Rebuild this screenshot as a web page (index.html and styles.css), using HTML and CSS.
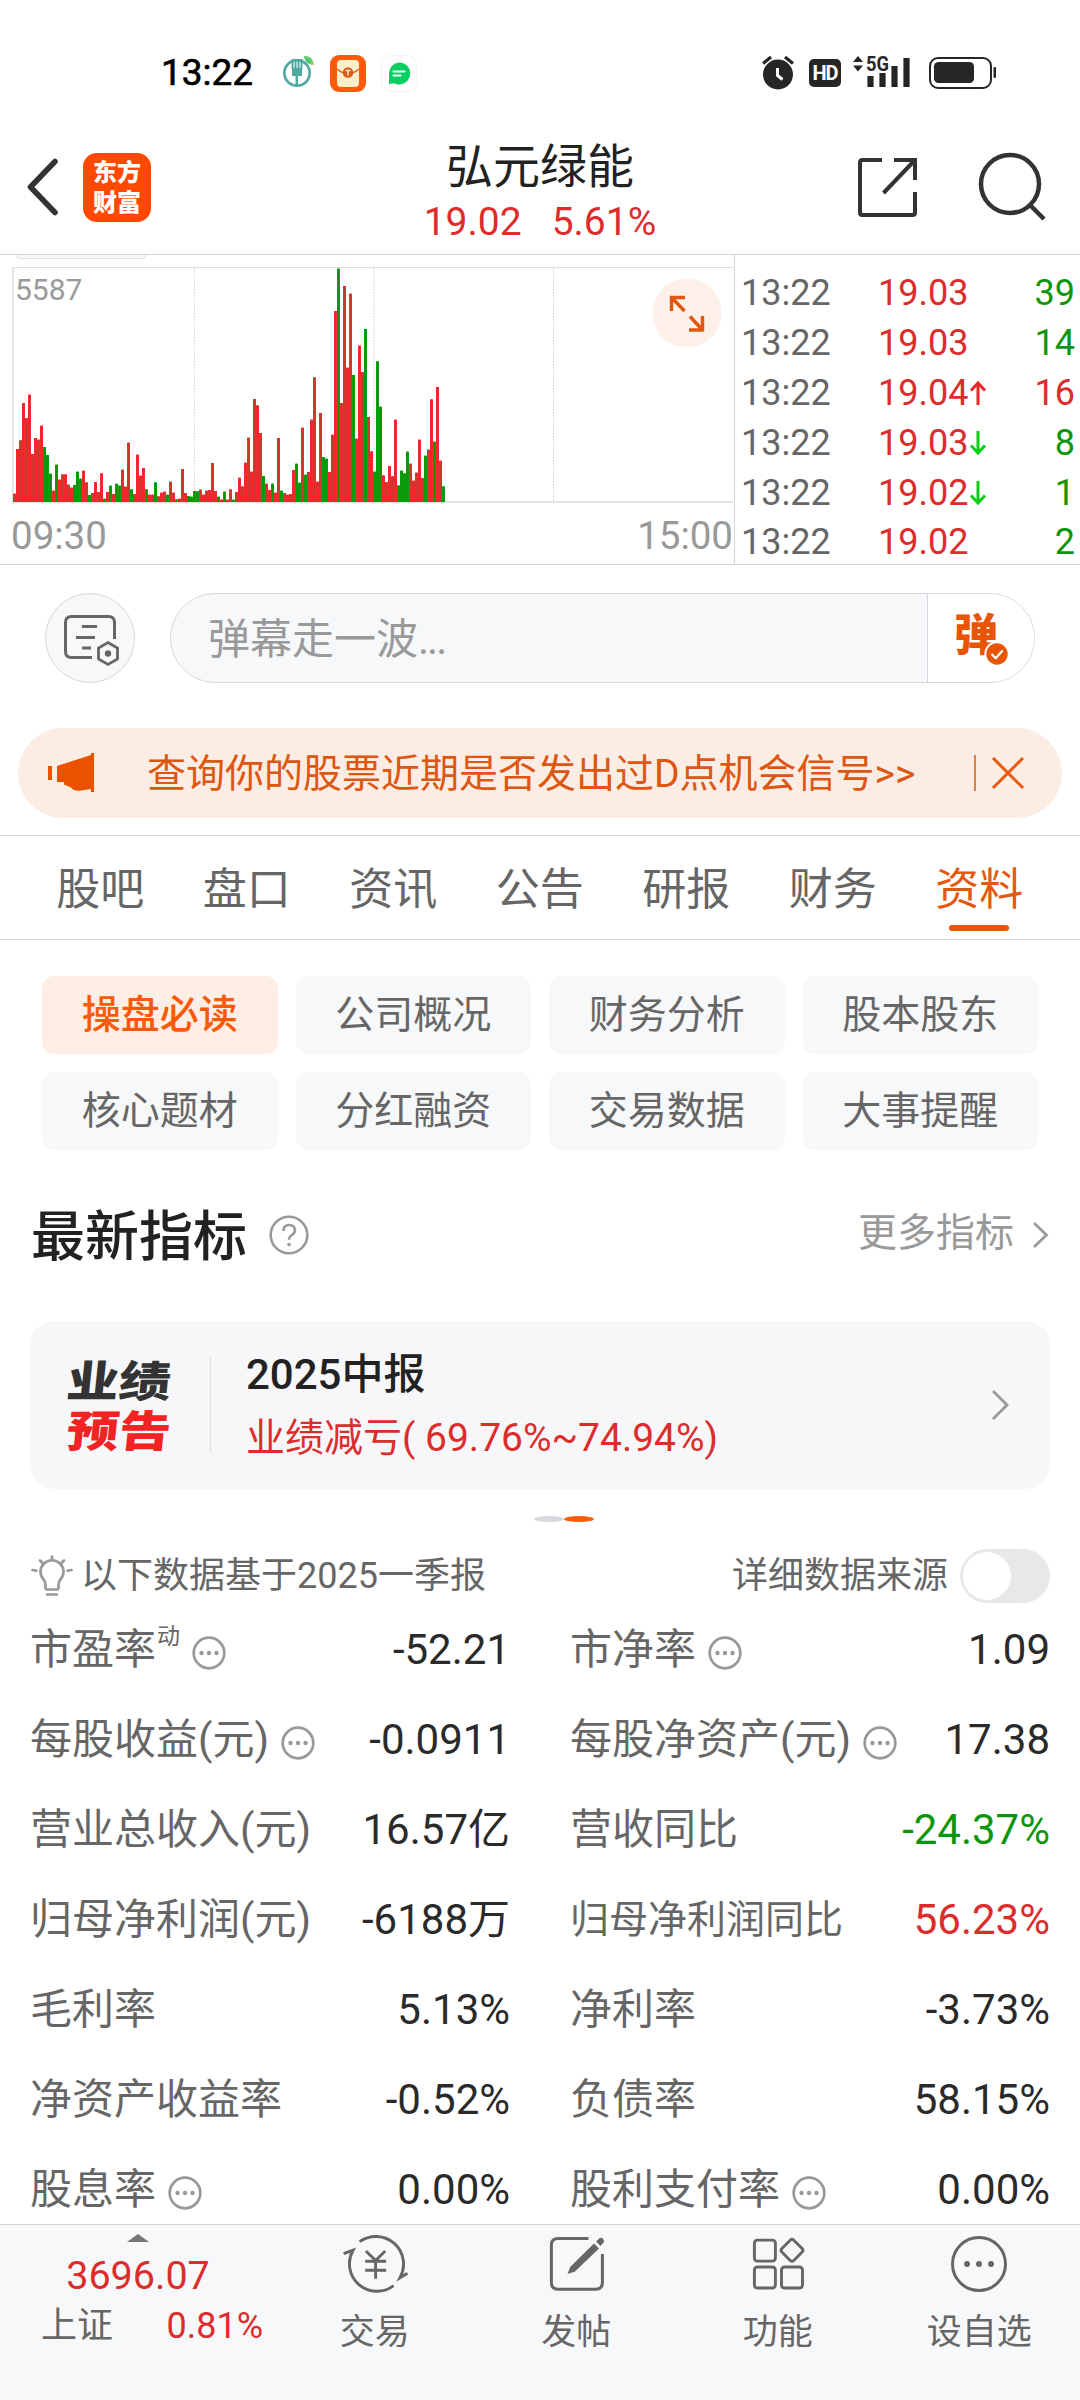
FILE: index.html
```html
<!DOCTYPE html>
<html lang="zh-CN">
<head>
<meta charset="utf-8">
<title>弘元绿能</title>
<link rel="stylesheet" href="styles.css">
</head>
<body>
<div class="screen">
  <header class="status">
    <span class="status-time">13:22</span>
    <svg class="app-a" width="34" height="34" viewBox="0 0 34 34">
      <circle cx="15" cy="19" r="12.7" fill="none" stroke="#4fa9a3" stroke-width="2.6"/>
      <path d="M10.500 5v10M13.500 5v10M16.500 5v10M19.500 5v10" stroke="#4fa9a3" stroke-width="2"/>
      <path d="M10 14h10v8h-4v9h-2.500v-9H10z" fill="#4fa9a3"/>
      <path d="M22 2c6 0 9 2 10 9-6 0-9-3-10-9z" fill="#7bcf5a"/>
      <path d="M22 2l6 3 1 4-5-1z" fill="#4cc58b"/>
    </svg>
    <svg class="app-b" width="36" height="37" viewBox="0 0 36 37">
      <rect width="36" height="37" rx="9" fill="#ff5a0a"/>
      <rect x="7" y="5" width="22" height="27" rx="4" fill="#fff0cc"/>
      <path d="M7 14q5 4.500 11 4.500T29 14" fill="none" stroke="#e2591c" stroke-width="1.500"/>
      <circle cx="18" cy="17.500" r="5.300" fill="#dd5a1b"/>
      <path d="M15.500 15.500h5M18 15.500v5" stroke="#fff0cc" stroke-width="1.400"/>
    </svg>
    <svg class="app-c" width="36" height="37" viewBox="0 0 36 37">
      <rect x=".5" y=".5" width="35" height="36" rx="9" fill="#fff" stroke="#f3f3f3"/>
      <path d="M18 7.500a11 11 0 1 1-5 20.700L8 29V18.500A11 11 0 0 1 18 7.500z" fill="#06d160"/>
      <path d="M12.500 16.500h11M12.500 20.500h7" stroke="#fff" stroke-width="1.900" stroke-linecap="round"/>
    </svg>
    <svg class="alarm" width="32" height="35" viewBox="0 0 32 35">
      <circle cx="16" cy="19.500" r="15" fill="#262626"/>
      <path d="M1 8.500l8-6.500M31 8.500L23 2" stroke="#262626" stroke-width="3.200"/>
      <path d="M15.500 13v7.500l5 4" fill="none" stroke="#fff" stroke-width="3"/>
    </svg>
    <span class="hd">HD</span>
    <svg class="signal" width="62" height="44" viewBox="0 -10 62 44">
      <path d="M1 7l5-6 5 6zM1 10.500l5 6 5-6z" fill="#262626"/>
      <text x="14" y="16" class="net" textLength="23" lengthAdjust="spacingAndGlyphs">5G</text>
      <path d="M18.500 21v11M30.500 18v14M42.500 11v21M54.500 3v29" stroke="#262626" stroke-width="6.200"/>
    </svg>
    <svg class="battery" width="68" height="32" viewBox="0 0 68 32">
      <rect x="1" y="1" width="61" height="30" rx="8" fill="#fff" stroke="#262626" stroke-width="2"/>
      <rect x="5" y="5" width="40" height="21" rx="4.500" fill="#262626"/>
      <rect x="64.500" y="10" width="2.500" height="11" rx="1" fill="#262626"/>
    </svg>
  </header>

  <nav class="titlebar">
    <svg class="back" width="34" height="58" viewBox="0 0 34 58"><path d="M30 3.500L5.500 29 30 54.500" fill="none" stroke="#333" stroke-width="5.500" stroke-linecap="round" stroke-linejoin="round"/></svg>
    <div class="logo"><span>东方</span><span>财富</span></div>
    <div class="stock">
      <h1>弘元绿能</h1>
      <p><span>19.02</span><span>5.61%</span></p>
    </div>
    <svg class="share" width="60" height="60" viewBox="0 0 60 60"><path d="M24 3H4.500Q2 3 2 5.500v50Q2 58 4.500 58h50Q57 58 57 55.500V35M36 3h21v20M57 3L25.500 36" fill="none" stroke="#333" stroke-width="4"/></svg>
    <svg class="search" width="70" height="70" viewBox="0 0 70 70"><circle cx="32" cy="33" r="29" fill="none" stroke="#333" stroke-width="4.500"/><path d="M52 54l14 14" stroke="#333" stroke-width="4.500"/></svg>
  </nav>

  <section class="quote">
    <div class="chart">
      <div class="stub"></div>
      <div class="plot">
        <svg class="volume" id="volume" width="721" height="236" viewBox="0 0 721 236">
          <path d="M182.500 1v233M362 1v233M541.500 1v233" stroke="#d0d0d0" stroke-width="1" stroke-dasharray="1.500 1.500"/>
          <path d="M0 .5h721" stroke="#dfdfdf" stroke-width="1"/>
          <path d="M1 0v236M0 235h721" stroke="#e3e3e3" stroke-width="2"/>
        </svg>
        <span class="peak">5587</span>
        <svg class="expand" width="70" height="70" viewBox="0 0 70 70"><circle cx="35" cy="35" r="34.500" fill="#fdf0e8"/><path d="M19.500 33V19.500H33M20 20l12.500 13M37 52h13.500V38M50 51.500L38 38.500" fill="none" stroke="#e0570d" stroke-width="3.400"/></svg>
      </div>
      <div class="axis"><span>09:30</span><span>15:00</span></div>
    </div>
    <div class="ticks">
      <div class="tick"><span>13:22</span><span class="up">19.03</span><i></i><b class="down">39</b></div>
      <div class="tick"><span>13:22</span><span class="up">19.03</span><i></i><b class="down">14</b></div>
      <div class="tick"><span>13:22</span><span class="up">19.04</span><i><svg width="18" height="24" viewBox="0 0 18 24"><path d="M9 24V2M2 9.500L9 2l7 7.500" fill="none" stroke="#ea2626" stroke-width="3"/></svg></i><b class="up">16</b></div>
      <div class="tick"><span>13:22</span><span class="up">19.03</span><i><svg width="18" height="24" viewBox="0 0 18 24"><path d="M9 0v22M2 14.500L9 22l7-7.500" fill="none" stroke="#0bcf16" stroke-width="3"/></svg></i><b class="down">8</b></div>
      <div class="tick"><span>13:22</span><span class="up">19.02</span><i><svg width="18" height="24" viewBox="0 0 18 24"><path d="M9 0v22M2 14.500L9 22l7-7.500" fill="none" stroke="#0bcf16" stroke-width="3"/></svg></i><b class="down">1</b></div>
      <div class="tick"><span>13:22</span><span class="up">19.02</span><i></i><b class="down">2</b></div>
    </div>
  </section>

  <section class="danmu">
    <div class="danmu-set">
      <svg width="58" height="54" viewBox="0 0 58 54"><path d="M51.500 25V8.500Q51.500 2.500 45.500 2.500H8.500Q2.500 2.500 2.500 8.500v29Q2.500 43.500 8.500 43.500H29M19 12.500h15M13 23.500h19M19 34h9" fill="none" stroke="#666" stroke-width="3"/><path d="M45 28.500l9.500 5.500v11L45 50.500 35.500 45V34z" fill="#f7f8fa" stroke="#666" stroke-width="2.800"/><circle cx="45" cy="39.500" r="3.200" fill="#666"/></svg>
    </div>
    <div class="danmu-bar">
      <span class="danmu-input">弹幕走一波<span class="ellipsis">...</span></span>
      <div class="danmu-btn"><span>弹</span>
        <svg class="check" width="26" height="26" viewBox="0 0 26 26"><circle cx="13" cy="13" r="11.700" fill="#e85505" stroke="#fff" stroke-width="2"/><path d="M7.500 13l4.200 4.200 7-7.700" fill="none" stroke="#fff" stroke-width="2.300"/></svg>
      </div>
    </div>
  </section>

  <section class="banner">
    <svg width="46" height="40" viewBox="0 0 46 40"><path d="M0 13h4v14H0zM9 13L43 2V0h3v39h-3v-3l-10 1.500q-7 1-10-3l-7-3V29H9z" fill="#eb5200"/></svg>
    <p>查询你的股票近期是否发出过D点机会信号&gt;&gt;</p>
    <span class="bar"></span>
    <svg width="34" height="34" viewBox="0 0 34 34"><path d="M2 2l30 30M32 2L2 32" stroke="#e85a10" stroke-width="3"/></svg>
  </section>

  <nav class="tabs">
    <span>股吧</span><span>盘口</span><span>资讯</span><span>公告</span><span>研报</span><span>财务</span><span class="on">资料</span>
  </nav>

  <section class="chips">
    <span class="on">操盘必读</span><span>公司概况</span><span>财务分析</span><span>股本股东</span>
    <span>核心题材</span><span>分红融资</span><span>交易数据</span><span>大事提醒</span>
  </section>

  <section class="heading">
    <h2>最新指标</h2>
    <svg width="40" height="40" viewBox="0 0 40 40"><circle cx="20" cy="20" r="18.300" fill="none" stroke="#999" stroke-width="2.600"/><path d="M14.500 16q0-6 5.700-6t5.700 5.200q0 3-3 4.800t-2.900 4.800" fill="none" stroke="#999" stroke-width="2.600"/><circle cx="20" cy="29.500" r="1.800" fill="#999"/></svg>
    <a>更多指标</a>
    <svg class="more" width="17" height="28" viewBox="0 0 17 28"><path d="M2 2l12.500 12L2 26" fill="none" stroke="#999" stroke-width="2.800"/></svg>
  </section>

  <section class="card">
    <div class="badge"><span>业绩</span><span class="red">预告</span></div>
    <div class="report">
      <h3>2025中报</h3>
      <p>业绩减亏( 69.76%~74.94%)</p>
    </div>
    <svg width="19" height="32" viewBox="0 0 19 32"><path d="M2 2l14 14L2 30" fill="none" stroke="#999" stroke-width="2.800"/></svg>
  </section>
  <div class="dots"><i></i><i class="on"></i></div>

  <section class="source">
    <svg width="42" height="42" viewBox="0 0 42 42"><path d="M14.500 29.500q0-3-2-5a11.500 11.500 0 1 1 17 0q-2 2-2 5v3q0 2-2 2h-9q-2 0-2-2zM16 39.500h10M21 1.500v3M9 5.500l2.500 2.500M33 5.500L30.500 8M1.500 15l4 .8M40.500 15l-4 .8" fill="none" stroke="#999" stroke-width="2.700" stroke-linecap="round"/></svg>
    <span class="basis">以下数据基于2025一季报</span>
    <span>详细数据来源</span>
    <i class="toggle"></i>
  </section>

  <section class="metrics">
    <div><span>市盈率</span><sup>动</sup><svg class="info"><use href="#dots"/></svg><b>-52.21</b></div>
    <div><span>市净率</span><svg class="info"><use href="#dots"/></svg><b>1.09</b></div>
    <div><span>每股收益(元)</span><svg class="info"><use href="#dots"/></svg><b>-0.0911</b></div>
    <div><span>每股净资产(元)</span><svg class="info"><use href="#dots"/></svg><b>17.38</b></div>
    <div><span>营业总收入(元)</span><b>16.57亿</b></div>
    <div><span>营收同比</span><b class="down">-24.37%</b></div>
    <div><span>归母净利润(元)</span><b>-6188万</b></div>
    <div><span class="tight">归母净利润同比</span><b class="up">56.23%</b></div>
    <div><span>毛利率</span><b>5.13%</b></div>
    <div><span>净利率</span><b>-3.73%</b></div>
    <div><span>净资产收益率</span><b>-0.52%</b></div>
    <div><span>负债率</span><b>58.15%</b></div>
    <div><span>股息率</span><svg class="info"><use href="#dots"/></svg><b>0.00%</b></div>
    <div><span>股利支付率</span><svg class="info"><use href="#dots"/></svg><b>0.00%</b></div>
  </section>

  <footer class="dock">
    <div class="index">
      <svg width="22" height="8" viewBox="0 0 22 8"><path d="M0 8L11 0l11 8z" fill="#777"/></svg>
      <strong>3696.07</strong>
      <p><span>上证</span><em>0.81%</em></p>
    </div>
    <div class="dock-item">
      <svg width="68" height="60" viewBox="0 0 68 60"><path d="M18.600 7.700A27.700 27.700 0 0 1 59 43.700l7.500-4.400M52.600 51.700A27.500 27.500 0 0 1 12 16.300l-9.400 3.400M24.900 17l9.700 9.500 9.600-9.500M34.600 26v18.700M24.200 27.300h21M24.200 36.300h21" fill="none" stroke="#666" stroke-width="2.900"/></svg>
      <span>交易</span>
    </div>
    <div class="dock-item">
      <svg width="58" height="60" viewBox="0 0 58 60"><path d="M41.500 4.500H11Q4.400 4.500 4.400 11v37.500Q4.400 55.200 11 55.200h37.500Q55.400 55.200 55.400 48.500V20" fill="none" stroke="#666" stroke-width="3"/><path d="M47 9.500l5 5-24 23-7.500 2.500 2.800-7.300zM49 7.500l3.500-3.300q2-1 3.500.5t.8 3.500L53.500 12z" fill="#666"/></svg>
      <span>发帖</span>
    </div>
    <div class="dock-item">
      <svg width="58" height="60" viewBox="0 0 58 60"><g fill="none" stroke="#666" stroke-width="2.900"><rect x="5.400" y="6.100" width="21" height="21" rx="3"/><rect x="5.400" y="33" width="21" height="21" rx="3"/><rect x="32.500" y="33" width="21" height="21" rx="3"/><rect x="34.600" y="7.900" width="16.800" height="16.800" rx="2.500" transform="rotate(45 43 16.300)"/></g></svg>
      <span>功能</span>
    </div>
    <div class="dock-item">
      <svg width="58" height="60" viewBox="0 0 58 60"><circle cx="29" cy="30" r="26.500" fill="none" stroke="#666" stroke-width="3"/><circle cx="17" cy="30" r="3" fill="#666"/><circle cx="29" cy="30" r="3" fill="#666"/><circle cx="41" cy="30" r="3" fill="#666"/></svg>
      <span>设自选</span>
    </div>
  </footer>
</div>

<svg class="defs" width="0" height="0">
  <symbol id="dots" viewBox="0 0 34 34"><circle cx="17" cy="17" r="15.300" fill="none" stroke="#999" stroke-width="2.700"/><circle cx="9.500" cy="17" r="2.200" fill="#999"/><circle cx="17" cy="17" r="2.200" fill="#999"/><circle cx="24.500" cy="17" r="2.200" fill="#999"/></symbol>
</svg>
<script src="volume.js"></script>
</body>
</html>
```
FILE: styles.css
```css
* { box-sizing: border-box; margin: 0; padding: 0; }
body { background: #fff; font-family: Roboto, "Noto Sans CJK SC", sans-serif; color: #222; }
svg { display: block; flex: none; }
i, em { font-style: normal; }
b { font-weight: 400; }
.defs { position: absolute; }
.screen { width: 1080px; height: 2400px; overflow: hidden; display: flex; flex-direction: column; }
.screen > * { flex: none; }
.up { color: #dc2c2c; }
.down { color: #0d960d; }

.status { height: 146px; display: flex; align-items: flex-start; padding-left: 161px; }
.status-time { font-size: 37px; font-weight: 400; -webkit-text-stroke: .6px #000; line-height: 42px; margin-top: 52px; width: 121px; color: #000; }
.app-a { margin-top: 54px; }
.app-b { margin: 55px 0 0 14px; }
.app-c { margin: 55px 0 0 15px; }
.alarm { margin: 55px 0 0 345px; }
.hd { margin: 59px 0 0 15px; width: 32px; height: 28px; border-radius: 5px; background: #262626; color: #fff; font-size: 20px; font-weight: 700; line-height: 28px; text-align: center; letter-spacing: -1px; }
.signal { margin: 45px 0 0 11px; }
.net { font: 700 21px Roboto, sans-serif; fill: #262626; }
.battery { margin: 57px 0 0 15px; }

.titlebar { height: 109px; border-bottom: 1px solid #d2d4d8; display: flex; align-items: flex-start; padding-left: 25px; }
.back { margin-top: 12px; }
.logo { margin: 7px 0 0 24px; width: 68px; height: 69px; border-radius: 14px; background: #ff4800; color: #fff; font-size: 24px; font-weight: 900; line-height: 30px; display: flex; flex-direction: column; align-items: center; padding-top: 5px; }
.stock { width: 378px; margin-left: 200px; text-align: center; }
.stock h1 { font-size: 47px; font-weight: 400; line-height: 47px; margin-top: -3px; color: #222; }
.stock p { display: flex; justify-content: center; gap: 30px; font-size: 39px; line-height: 44px; margin-top: 10px; color: #dc2c2c; }
.share { margin: 11px 0 0 129px; }
.search { margin: 5px 0 0 60px; }

.quote { height: 310px; border-bottom: 1px solid #d5d5d5; display: flex; overflow: hidden; }
.chart { width: 735px; border-right: 1px solid #d5d5d5; }
.stub { width: 130px; height: 4px; margin-left: 16px; border: 1px solid #dfe1e8; border-top: 0; border-radius: 0 0 8px 8px; background: #f7f8fc; }
.plot { position: relative; margin: 8px 0 0 12px; width: 721px; height: 236px; }
.peak { position: absolute; left: 3px; top: 5px; font-size: 30px; line-height: 36px; color: #999; }
.expand { position: absolute; left: 640px; top: 11px; }
.axis { display: flex; justify-content: space-between; padding: 10px 1px 0 11px; font-size: 38.500px; line-height: 46px; color: #999; }
.ticks { flex: 1; padding: 13.500px 5px 0 6px; }
.tick { height: 49.800px; display: flex; align-items: center; font-size: 36px; line-height: 50px; color: #666; }
.tick > span:first-child { width: 137px; }
.tick i { width: 20px; padding-left: 1px; }
.tick b { margin-left: auto; }

.danmu { height: 163px; padding: 28px 45px 0; display: flex; gap: 35px; }
.danmu-set { width: 90px; height: 90px; border: 1.500px solid #d5d8dd; border-radius: 50%; background: #f7f8fa; padding: 20px 0 0 17px; }
.danmu-bar { flex: 1; height: 90px; border: 1.500px solid #d5d8dd; border-radius: 45px; background: #f7f8fa; display: flex; overflow: hidden; }
.danmu-input { flex: 1; padding-left: 37px; font-size: 42px; line-height: 92px; color: #999; }
.ellipsis { letter-spacing: -2px; }
.danmu-btn { position: relative; width: 107px; background: #fff; border-left: 1.500px solid #d5d8dd; padding-left: 26px; font-size: 44px; font-weight: 900; line-height: 85px; color: #e85505; }
.check { position: absolute; left: 56px; top: 47px; }

.banner { margin: 0 18px; height: 90px; border-radius: 45px; background: #fcede4; display: flex; align-items: center; padding: 0 37px 0 30px; color: #dd5712; }
.banner p { flex: 1; padding-left: 53px; font-size: 39px; line-height: 90px; padding-top: 1px; }
.bar { width: 2px; height: 36px; background: #e0803f; margin-right: 15px; }

.tabs { margin-top: 17px; height: 105px; border-top: 1px solid #d8d8d8; border-bottom: 1px solid #d8d8d8; display: grid; grid-template-columns: repeat(7, 146.500px); grid-template-rows: 103px; padding-left: 27px; font-size: 44px; line-height: 109px; color: #666; text-align: center; }
.tabs .on { position: relative; color: #e2590f; }
.tabs .on::after { content: ""; position: absolute; left: 43px; bottom: 8px; width: 60px; height: 6px; border-radius: 3px; background: #e85505; }

.chips { margin: 36px 42px 0; display: grid; grid-template-columns: repeat(4, 1fr); gap: 18px; }
.chips span { height: 78px; border-radius: 12px; background: #f7f8fa; font-size: 39px; line-height: 79px; text-align: center; color: #666; }
.chips .on { background: #ffeee5; color: #f95a09; font-weight: 500; }

.heading { height: 171px; display: flex; align-items: center; padding: 0 31px 2px; }
.heading h2 { font-size: 54px; font-weight: 500; line-height: 60px; margin-right: 22px; padding-top: 7px; color: #222; }
.heading a { margin-left: auto; font-size: 39px; line-height: 60px; padding-bottom: 3px; color: #999; }
.more { margin-left: 18px; }

.card { margin: 0 30px; height: 168px; border-radius: 24px; background: #f7f7fa; display: flex; align-items: center; padding: 0 40px 0 37px; }
.badge { width: 144px; height: 96px; border-right: 1px solid #e0e0e4; font-size: 46px; font-weight: 900; line-height: 50px; color: #333; display: flex; flex-direction: column; align-items: flex-start; }
.badge span { height: 50px; transform: skewX(-6deg) scale(1.130, .940); transform-origin: left center; }
.badge .red { color: #f22323; }
.report { flex: 1; padding: 3px 0 0 35px; }
.report h3 { font-size: 42px; font-weight: 500; line-height: 62px; }
.report p { font-size: 39px; line-height: 64px; color: #dc2c2c; }

.dots { height: 59px; display: flex; justify-content: center; padding: 27px 0 0 48px; }
.dots i { width: 30px; height: 6px; border-radius: 50%; background: #d5d9dd; }
.dots .on { background: #fc5a06; }

.source { height: 56px; display: flex; align-items: center; padding: 0 30px 0 31px; font-size: 36px; line-height: 50px; color: #666; }
.source span { padding-bottom: 1px; }
.basis { margin-left: 8px; flex: 1; }
.toggle { margin-left: 12px; width: 90px; height: 54px; border-radius: 27px; background: #e8e8ea; padding: 3px; }
.toggle::before { content: ""; display: block; width: 48px; height: 48px; border-radius: 50%; background: #fff; }

.metrics { height: 620px; overflow: hidden; padding: 0 30px; display: grid; grid-template-columns: 1fr 1fr; grid-auto-rows: 90px; column-gap: 60px; font-size: 42px; color: #666; }
.metrics > div { display: flex; align-items: center; line-height: 90px; white-space: nowrap; padding-top: 2px; }
.metrics b { margin-left: auto; color: #2a2a2a; }
.metrics b.up { color: #dc2c2c; }
.metrics b.down { color: #0d960d; }
.metrics sup { font-size: 23px; line-height: 22px; align-self: flex-start; margin: 20px 0 0 1px; }
.metrics .tight { font-size: 39px; }
.info { width: 34px; height: 34px; margin: 6px 0 0 12px; }

.dock { flex: 1; margin-top: auto; border-top: 1px solid #d2d4d8; background: #f7f8fa; display: grid; grid-template-columns: 274px repeat(4, 201.500px); color: #666; }
.index { padding: 9px 0 0 2px; display: flex; flex-direction: column; align-items: center; }
.index strong { font-size: 39.500px; font-weight: 400; line-height: 46px; margin-top: 11px; color: #dc2c2c; }
.index p { width: 222px; margin-left: 28px; display: flex; justify-content: space-between; font-size: 36px; line-height: 50px; margin-top: 2px; }
.index em { color: #dc2c2c; }
.dock-item { display: flex; flex-direction: column; align-items: center; padding-top: 9px; font-size: 35px; line-height: 50px; gap: 14px; }
```
FILE: volume.js
```js
// Minute bars: the letter is the direction (r up, g down), the number the bar height in thirds of a pixel.
var bars = ("r25 r159 r185 r297 r252 r322 r144 r192 r187 r229 g165 g141 g85 r34 g112 r67 r83 r83 r52 r43 g51 g91 g70 r94 " +
  "r59 g21 r27 r60 r30 r86 g10 r30 g49 r24 g55 g49 r97 r46 r178 g38 r24 r142 r79 r102 g38 r22 r22 g59 " +
  "r17 r28 r31 g22 r61 r28 g8 r10 r99 r27 g18 g16 g33 g32 r37 r22 r34 r36 r117 r33 g16 r7 g31 r7 " +
  "r38 g7 r30 r73 r47 r118 r193 r91 r309 r290 r207 g78 r55 r36 g55 r28 r192 g34 r27 r22 r24 r96 g115 g58 " +
  "r223 g82 r90 r247 r374 r61 r267 g135 g130 r90 r202 r573 g700 r297 r648 r403 r625 g381 r190 r469 r390 g519 r255 r152 " +
  "g91 g422 g286 r80 r60 r108 r77 r247 g50 g94 g86 g151 r115 r64 r88 r187 r72 g139 r157 r308 g181 r345 r124 g47").split(" ");
var svg = document.getElementById("volume");

function rect(x, w, h, fill) {
  var r = document.createElementNS("http://www.w3.org/2000/svg", "rect");
  r.setAttribute("x", x);
  r.setAttribute("y", 235 - h);
  r.setAttribute("width", w);
  r.setAttribute("height", h);
  r.setAttribute("fill", fill);
  svg.appendChild(r);
}

bars.forEach(function (bar, i) {
  var up = bar[0] === "r";
  var h = Number(bar.slice(1)) / 3;
  rect(1 + i * 3, 3, h, up ? "#f42a2a" : "#0aa00a");
  rect(2 + i * 3, 1, h, up ? "#cf3434" : "#128f12");
});
```
